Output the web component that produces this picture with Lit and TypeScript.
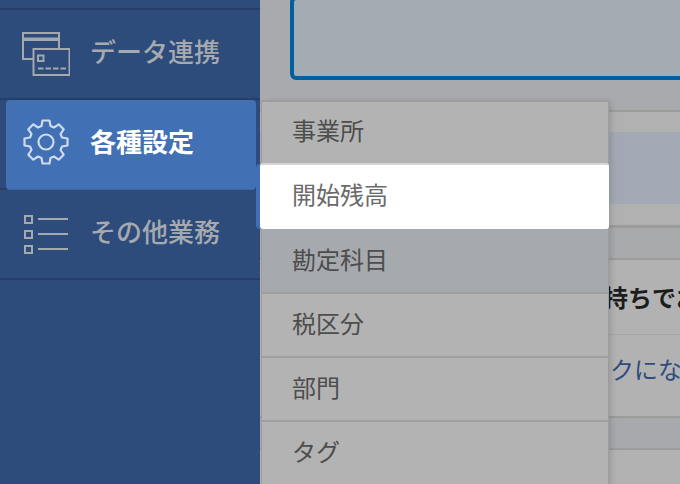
import { LitElement, css, html, svg } from 'lit';
import { customElement } from 'lit/decorators.js';

const cardsIcon = svg`
  <path d="M11 29H1V3H37V18" />
  <rect class="solid" x="1" y="7.500" width="36" height="3.500" />
  <rect x="11.500" y="19" width="36" height="26" />
  <rect x="16" y="25.500" width="5.500" height="5.500" />
  <path d="M16 38.500H44" stroke-dasharray="5.500 2" />
`;

const gearIcon = svg`
  <path d="M20.500 1.500h7l1 5.500 3.500 1.500 4.700-3.200 5 5-3.200 4.700 1.500 3.500 5.500 1v7l-5.500 1-1.500 3.500 3.200 4.700-5 5-4.700-3.200-3.500 1.500-1 5.500h-7l-1-5.500-3.500-1.500-4.700 3.200-5-5 3.200-4.700-1.500-3.500-5.500-1v-7l5.500-1 1.500-3.500-3.200-4.700 5-5 4.700 3.200 3.500-1.500z" />
  <circle cx="24" cy="23" r="7.500" />
`;

const listIcon = svg`
  <rect x="3" y="6" width="7" height="7" />
  <rect x="3" y="21" width="7" height="7" />
  <rect x="3" y="36" width="7" height="7" />
  <path d="M16 9H46M16 24H46M16 39H46" />
`;

@customElement('app-root')
export class AppRoot extends LitElement {
  static styles = css`
    :host {
      display: block;
      position: relative;
      width: 680px;
      height: 484px;
      overflow: hidden;
      font-family: 'Liberation Sans', 'Noto Sans CJK JP', sans-serif;
      background: #a9aaad;
    }

    .page {
      display: flex;
      height: 484px;
    }

    /* sidebar */
    .sidebar {
      flex: 0 0 260px;
      padding-top: 8px;
      background: #2d4b7b;
    }

    .nav-list {
      border-top: 2px solid #263f67;
    }

    .nav-item {
      display: flex;
      align-items: center;
      box-sizing: border-box;
      height: 90px;
      padding-left: 22px;
      border-bottom: 2px solid #263f67;
      font-size: 26px;
      font-weight: 500;
      color: #a6a9ad;
    }

    .nav-item.active {
      padding: 0 4px 0 6px;
      border: 0;
      box-shadow: inset 0 -2px 0 #263f67;
    }

    .pill {
      display: flex;
      align-items: center;
      flex: 1;
      height: 100%;
      padding-left: 16px;
      border-radius: 4px;
      background: #4270b5;
      box-shadow: inset 0 -1px 0 #3c66a6;
      color: #fff;
      font-weight: 700;
    }

    .label {
      padding-bottom: 8px;
    }

    .pill .label {
      padding-bottom: 10px;
    }

    .nav-icon {
      flex: none;
      width: 48px;
      height: 48px;
      margin-right: 20px;
      fill: none;
      stroke: #a5a8ad;
      stroke-width: 2;
    }

    .nav-icon .solid {
      fill: #a5a8ad;
      stroke: none;
    }

    .pill .nav-icon {
      margin-top: -4px;
      stroke: #cfdaed;
      stroke-width: 2.200;
      stroke-linejoin: round;
    }

    /* page behind the dropdown */
    .content {
      flex: 1;
      min-width: 0;
      display: flex;
      flex-direction: column;
    }

    .notice {
      flex: none;
      height: 76px;
      margin: -4px -10px 0 30px;
      border: 4px solid #005f9f;
      border-radius: 6px;
      background: #a3abb3;
    }

    .panel {
      flex: none;
      margin-top: 30px;
      padding: 20px 0 21px;
      border-top: 2px solid #9c9c9d;
      border-bottom: 3px solid #9c9c9d;
      background: #b1b1b1;
    }

    .panel-band {
      height: 72px;
      background: #a3a9b4;
    }

    .rows {
      flex: 1;
      display: flex;
      flex-direction: column;
    }

    .row {
      display: flex;
      align-items: center;
      box-sizing: border-box;
      flex: none;
      overflow: hidden;
      border-bottom: 2px solid #9c9c9d;
      background: #b2b2b2;
      font-size: 24px;
      white-space: nowrap;
    }

    .row.head {
      height: 32px;
      background: #a9aaac;
    }

    .row.question {
      height: 75px;
      padding: 0 0 2px 320px;
      border-bottom-width: 1px;
      border-bottom-color: #a8a8a8;
      font-weight: 700;
      color: #1d1d1d;
    }

    .row.link {
      height: 83px;
      padding: 0 0 15px 350px;
      color: #2d4b80;
    }

    .row.band {
      height: 32px;
      background: #a8a9ac;
    }

    .row.plain {
      flex: 1;
      border: 0;
    }

    /* dropdown */
    .menu-tab {
      position: absolute;
      left: 256px;
      top: 164px;
      width: 8px;
      height: 65px;
      border-radius: 4px;
      background: #4270b5;
    }

    .menu {
      position: absolute;
      left: 261px;
      top: 100px;
      width: 348px;
      height: 400px;
      box-sizing: border-box;
      border: solid #9d9d9d;
      border-width: 2px 1px 0 1px;
      background: #b3b3b3;
      box-shadow: 4px 0 6px -2px rgba(0, 0, 0, 0.15);
    }

    .menu-item {
      display: flex;
      align-items: center;
      box-sizing: border-box;
      height: 64px;
      padding: 0 0 6px 30px;
      border-bottom: 2px solid #9f9f9f;
      font-size: 24px;
      color: #4d4d4d;
    }

    .menu-item.open {
      height: 62px;
      padding-bottom: 7px;
      border-bottom: 0;
    }

    .menu-item.selected {
      position: relative;
      height: 66px;
      margin: -1px -1px 0 -2px;
      padding: 0 0 7px 32px;
      border-top: 2px solid #d6d6d6;
      border-bottom: 0;
      border-radius: 3px;
      background: #fff;
      color: #6a6a6a;
    }

    .menu-item.hover {
      height: 65px;
      padding-bottom: 4px;
      background: #a6a9ae;
    }
  `;

  render() {
    return html`
      <div class="page">
        <nav class="sidebar">
          <div class="nav-list">
            <div class="nav-item">
              <svg class="nav-icon" viewBox="0 0 48 48" aria-hidden="true">${cardsIcon}</svg>
              <span class="label">データ連携</span>
            </div>
            <div class="nav-item active">
              <div class="pill">
                <svg class="nav-icon" viewBox="0 0 48 48" aria-hidden="true">${gearIcon}</svg>
                <span class="label">各種設定</span>
              </div>
            </div>
            <div class="nav-item">
              <svg class="nav-icon" viewBox="0 0 48 48" aria-hidden="true">${listIcon}</svg>
              <span class="label">その他業務</span>
            </div>
          </div>
        </nav>
        <main class="content">
          <div class="notice"></div>
          <section class="panel"><div class="panel-band"></div></section>
          <div class="rows">
            <div class="row head"></div>
            <div class="row question"><span>お持ちでお</span></div>
            <div class="row link"><span>クにな</span></div>
            <div class="row band"></div>
            <div class="row plain"></div>
          </div>
        </main>
      </div>
      <div class="menu-tab"></div>
      <div class="menu">
        <div class="menu-item open">事業所</div>
        <div class="menu-item selected">開始残高</div>
        <div class="menu-item hover">勘定科目</div>
        <div class="menu-item">税区分</div>
        <div class="menu-item">部門</div>
        <div class="menu-item">タグ</div>
      </div>
    `;
  }
}
